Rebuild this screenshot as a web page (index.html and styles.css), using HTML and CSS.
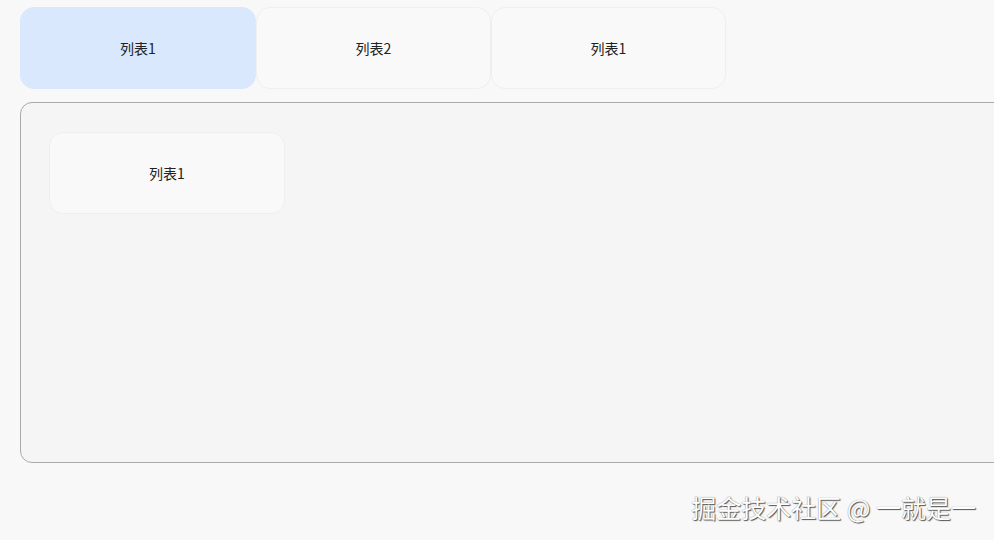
FILE: index.html
```html
<!DOCTYPE html>
<html lang="zh-CN">
<head>
  <meta charset="UTF-8">
  <meta name="viewport" content="width=device-width, initial-scale=1.0">
  <title>列表拖拽</title>
  <link rel="stylesheet" href="styles.css">
</head>
<body>
  <div id="tabs">
    <div class="item active">列表1</div>
    <div class="item">列表2</div>
    <div class="item">列表1</div>
  </div>

  <div id="board">
    <div class="item">列表1</div>
  </div>

  <div class="mark">掘金技术社区 @ 一就是一</div>
</body>
</html>
```

FILE: styles.css
```css
body{
  margin: 0px;
  padding: 7px 0px 0px 20px;
  background: #f8f8f8;
  font-family: "Noto Sans CJK SC", "Liberation Sans", sans-serif;
  font-size: 14px;
  color: #222;
  height: 100vh;
  box-sizing: border-box;
  overflow: hidden;
  position: relative;
}

#tabs{
  display: flex;
  gap: 0px;
}

.item{
  width: 235px;
  height: 82px;
  box-sizing: border-box;
  display: flex;
  align-items: center;
  justify-content: center;
  border: 1px solid #efefef;
  border-radius: 14px;
  background: #f9f9f9;
}

.item.active{
  width: 236px;
  background: #d9e8fd;
  border-color: #d9e8fd;
}

#board{
  margin-top: 13px;
  width: 1000px;
  height: 361px;
  box-sizing: border-box;
  border: 1px solid #aaa;
  border-radius: 12px;
  background: #f5f5f5;
  padding: 29px 28px;
}

#board .item{
  width: 236px;
  height: 82px;
  border-color: #efefef;
}

.mark{
  position: absolute;
  right: 18px;
  bottom: 15px;
  font-size: 25px;
  color: #fff;
  text-shadow: 1px 1px 1px #555, 0 0 1px #777;
}
```
